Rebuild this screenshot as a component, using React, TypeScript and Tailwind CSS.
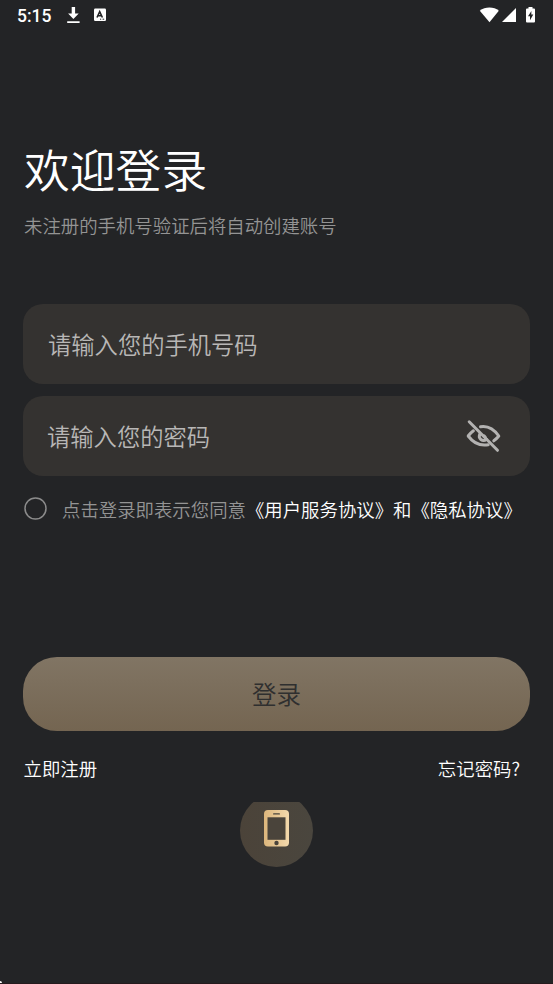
import { useState } from "react";

function StatusBar() {
  return (
    <div className="flex h-[30px] items-center pl-[17px] pr-[18px] text-white">
      <span className="w-[35px] whitespace-nowrap pt-px font-[Roboto] text-[17.5px] font-medium leading-[30px]">
        5:15
      </span>
      <svg
        className="ml-[15px]"
        width="13"
        height="17"
        viewBox="0 0 13 17"
        fill="currentColor"
      >
        <path d="M4.700 0h3.400v6.500h3.600L6.400 12 1.100 6.500h3.600zM.2 14.200h12.400v1.800H.2z" />
      </svg>
      <svg className="ml-[14px]" width="12" height="14" viewBox="0 0 12 14">
        <rect y=".5" width="12" height="12.500" rx="1.200" fill="#fff" />
        <path
          d="M3 9.500 5.700 3.600 8.400 9.500M4 7.800h3.400"
          fill="none"
          stroke="#232426"
          strokeWidth="1.600"
        />
        <path d="M6 11.200h1.200M8.600 11.200h1.600" stroke="#232426" />
      </svg>
      <svg
        className="ml-auto"
        width="20"
        height="16"
        viewBox="0 0 20 16"
        fill="currentColor"
      >
        <path d="M10.500 15.300.8 3.700C6-.6 15-.6 19.800 3.700z" />
      </svg>
      <svg
        className="ml-[3px]"
        width="14"
        height="14"
        viewBox="0 0 14 14"
        fill="currentColor"
      >
        <path d="M14 0v14H0z" />
      </svg>
      <svg className="ml-[10px]" width="9" height="16" viewBox="0 0 9 16">
        <path
          d="M2.500 0h4v1.600H8q1 0 1 1V14.500q0 1-1 1H1q-1 0-1-1V2.600q0-1 1-1h1.500z"
          fill="#fff"
        />
        <path d="M5.400 4 2 9.200h2v4l3.300-5.600H5.300z" fill="#232426" />
      </svg>
    </div>
  );
}

function EyeIcon({ off }: { off: boolean }) {
  return (
    <svg
      width="36"
      height="34"
      viewBox="0 0 36 34"
      fill="none"
      stroke="#b3b2b1"
      strokeWidth="3"
      strokeLinecap="round"
      strokeLinejoin="round"
    >
      {off ? (
        <>
          <path d="M14.500 7.800c7.500-1.300 13.500 2.500 18.300 9.200q-2.200 2.800-5 4.800" />
          <path d="M7.400 11.800Q4.400 14 2.200 17c5.500 7.500 12.500 10 20 8.700" />
          <path d="M13.900 15c-2.300 4.500 2.800 8.300 6.600 5.300" />
          <path d="M18 16.800l1.300 1.500" />
          <path d="M3.200 2.800 31.500 31.300" />
        </>
      ) : (
        <>
          <path d="M2.500 16.500q15.500-19 31 0-15.500 19-31 0z" />
          <circle cx="18" cy="16.500" r="4.500" />
        </>
      )}
    </svg>
  );
}

function PhoneIcon() {
  return (
    <svg width="25" height="37" viewBox="0 0 25 37">
      <defs>
        <linearGradient id="gold" x1="0" y1="0" x2="1" y2="0">
          <stop offset="0" stopColor="#dcb67c" />
          <stop offset="1" stopColor="#f3d9ac" />
        </linearGradient>
      </defs>
      <rect width="25" height="36.500" rx="4" fill="url(#gold)" />
      <rect x="3.500" y="7.300" width="18" height="22.500" fill="#4a443b" />
      <rect x="9" y="3.200" width="7" height="1.400" rx=".7" fill="#4a443b" />
      <circle cx="12.500" cy="33" r="2.200" fill="#4a443b" />
    </svg>
  );
}

export default function App() {
  const [phone, setPhone] = useState("");
  const [password, setPassword] = useState("");
  const [hidden, setHidden] = useState(true);
  const [agreed, setAgreed] = useState(false);

  return (
    <div className="relative flex h-[984px] w-[553px] flex-col overflow-hidden border-b border-[#251a1d] bg-[#232426] font-['Noto_Sans_CJK_SC',sans-serif] text-[18.4px] font-[350]">
      <StatusBar />
      <form
        className="flex flex-col px-[23px]"
        onSubmit={(e) => e.preventDefault()}
      >
        <h1 className="mt-[104px] pl-px text-[45.8px] leading-[68px] text-white">
          欢迎登录
        </h1>
        <p className="mt-[9px] pl-px leading-[28px] text-[#949494]">
          未注册的手机号验证后将自动创建账号
        </p>

        <div className="mt-[65px] flex h-[80px] items-center rounded-[20px] bg-[#343230] px-[25px]">
          <input
            type="tel"
            value={phone}
            onChange={(e) => setPhone(e.target.value)}
            placeholder="请输入您的手机号码"
            className="h-[40px] w-full bg-transparent text-[23.3px] text-white outline-none placeholder:text-[#b8b7b6]"
          />
        </div>
        <div className="mt-[12px] flex h-[80px] items-center rounded-[20px] bg-[#343230] pl-[24px] pr-[28px]">
          <input
            type={hidden ? "password" : "text"}
            value={password}
            onChange={(e) => setPassword(e.target.value)}
            placeholder="请输入您的密码"
            className="h-[40px] min-w-0 flex-1 bg-transparent text-[23.3px] text-white outline-none placeholder:text-[#b8b7b6]"
          />
          <button type="button" onClick={() => setHidden(!hidden)}>
            <EyeIcon off={hidden} />
          </button>
        </div>

        <div className="mt-[19px] flex h-[28px] items-center whitespace-nowrap">
          <button
            type="button"
            onClick={() => setAgreed(!agreed)}
            className="mb-[2px] ml-[1px] shrink-0"
          >
            <svg width="23" height="23" viewBox="0 0 23 23">
              <circle
                cx="11.5"
                cy="11.5"
                r="10.5"
                fill={agreed ? "#dcb67c" : "none"}
                stroke="#8b8b8b"
                strokeWidth="1.5"
              />
            </svg>
          </button>
          <span className="ml-[15px] pt-px text-[#949494]">
            点击登录即表示您同意
          </span>
          <span className="pt-px text-white">
            《用户服务协议》和《隐私协议》
          </span>
        </div>

        <button
          type="submit"
          className="mt-[134px] h-[74px] rounded-[34px] bg-linear-to-b from-[#817564] to-[#746551] text-[24.5px] text-[#2f2f2f]"
        >
          登录
        </button>

        <div className="mt-[23px] flex justify-between pl-[0.5px] pr-[10px] leading-[28px] text-white">
          <a href="#">立即注册</a>
          <a href="#">忘记密码?</a>
        </div>
      </form>

      {/* the round button is cut off by the top of its container */}
      <div className="mt-[20px] flex h-[65px] items-end justify-center overflow-hidden">
        <button
          type="button"
          className="flex size-[73.5px] shrink-0 items-center justify-center rounded-full bg-linear-to-r from-[#4b4339] to-[#4a463e] pb-[4px]"
        >
          <PhoneIcon />
        </button>
      </div>

      <span className="absolute -bottom-px left-0 h-[3px] w-[2px] rounded-tr-full bg-white" />
    </div>
  );
}
